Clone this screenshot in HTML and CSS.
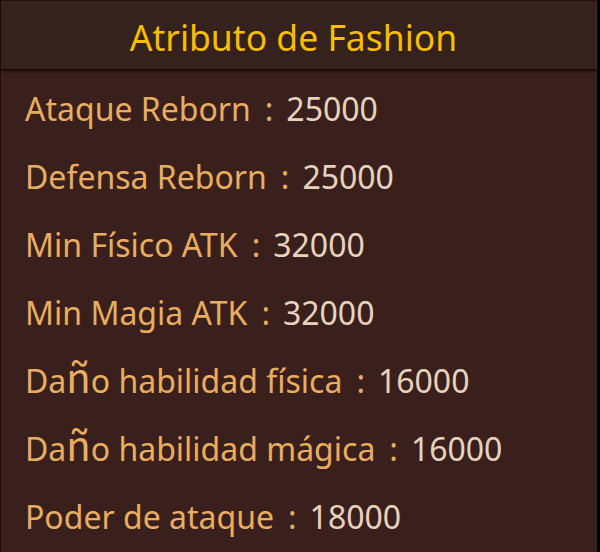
FILE: index.html
```html
<!DOCTYPE html>
<html>
<head>
<meta charset="utf-8">
<link rel="stylesheet" href="styles.css">
</head>
<body>
<div class="panel">
  <div class="header"><h1 class="title">Atributo de Fashion</h1></div>
  <ul class="list">
    <li class="row"><span class="label">Ataque Reborn</span><span class="colon">:</span><span class="value">25000</span></li>
    <li class="row"><span class="label">Defensa Reborn</span><span class="colon">:</span><span class="value">25000</span></li>
    <li class="row"><span class="label">Min Físico ATK</span><span class="colon">:</span><span class="value">32000</span></li>
    <li class="row"><span class="label">Min Magia ATK</span><span class="colon">:</span><span class="value">32000</span></li>
    <li class="row"><span class="label">Da<span class="enye">ñ</span>o habilidad física</span><span class="colon">:</span><span class="value">16000</span></li>
    <li class="row"><span class="label">Da<span class="enye">ñ</span>o habilidad mágica</span><span class="colon">:</span><span class="value">16000</span></li>
    <li class="row"><span class="label">Poder de ataque</span><span class="colon">:</span><span class="value">18000</span></li>
  </ul>
</div>
</body>
</html>
```
FILE: styles.css
```css
html, body {
  margin: 0;
  padding: 0;
  background: #000;
}
body {
  width: 600px;
  height: 552px;
  overflow: hidden;
  font-family: "Noto Sans", "Open Sans", sans-serif;
}
.panel {
  width: 596px;
  height: 552px;
  background: #3a201c;
  border-left: 1px solid #1c0f0c;
}
.header {
  height: 69px;
  background: #36221d;
  border-top: 1px solid #1e110d;
  border-right: 1px solid #4d2a22;
  box-shadow: 0 2px 3px #120806;
  box-sizing: border-box;
  display: flex;
  align-items: center;
  justify-content: center;
  position: relative;
}
.title {
  margin: 0;
  font-weight: normal;
  font-size: 35.5px;
  color: #f5bf00;
  padding: 4px 10px 0 0;
}
.list {
  list-style: none;
  margin: 0;
  padding: 6px 0 0 24px;
}
.row {
  height: 68px;
  line-height: 68px;
  font-size: 32px;
  white-space: nowrap;
}
.label {
  color: #e9ad60;
}
.colon {
  color: #e9ad60;
  padding: 0 13px 0 14px;
}
.value {
  color: #e7d3bd;
}
.enye {
  font-family: "Noto Sans CJK SC", sans-serif;
  font-size: 40px;
  line-height: 0;
}
```
